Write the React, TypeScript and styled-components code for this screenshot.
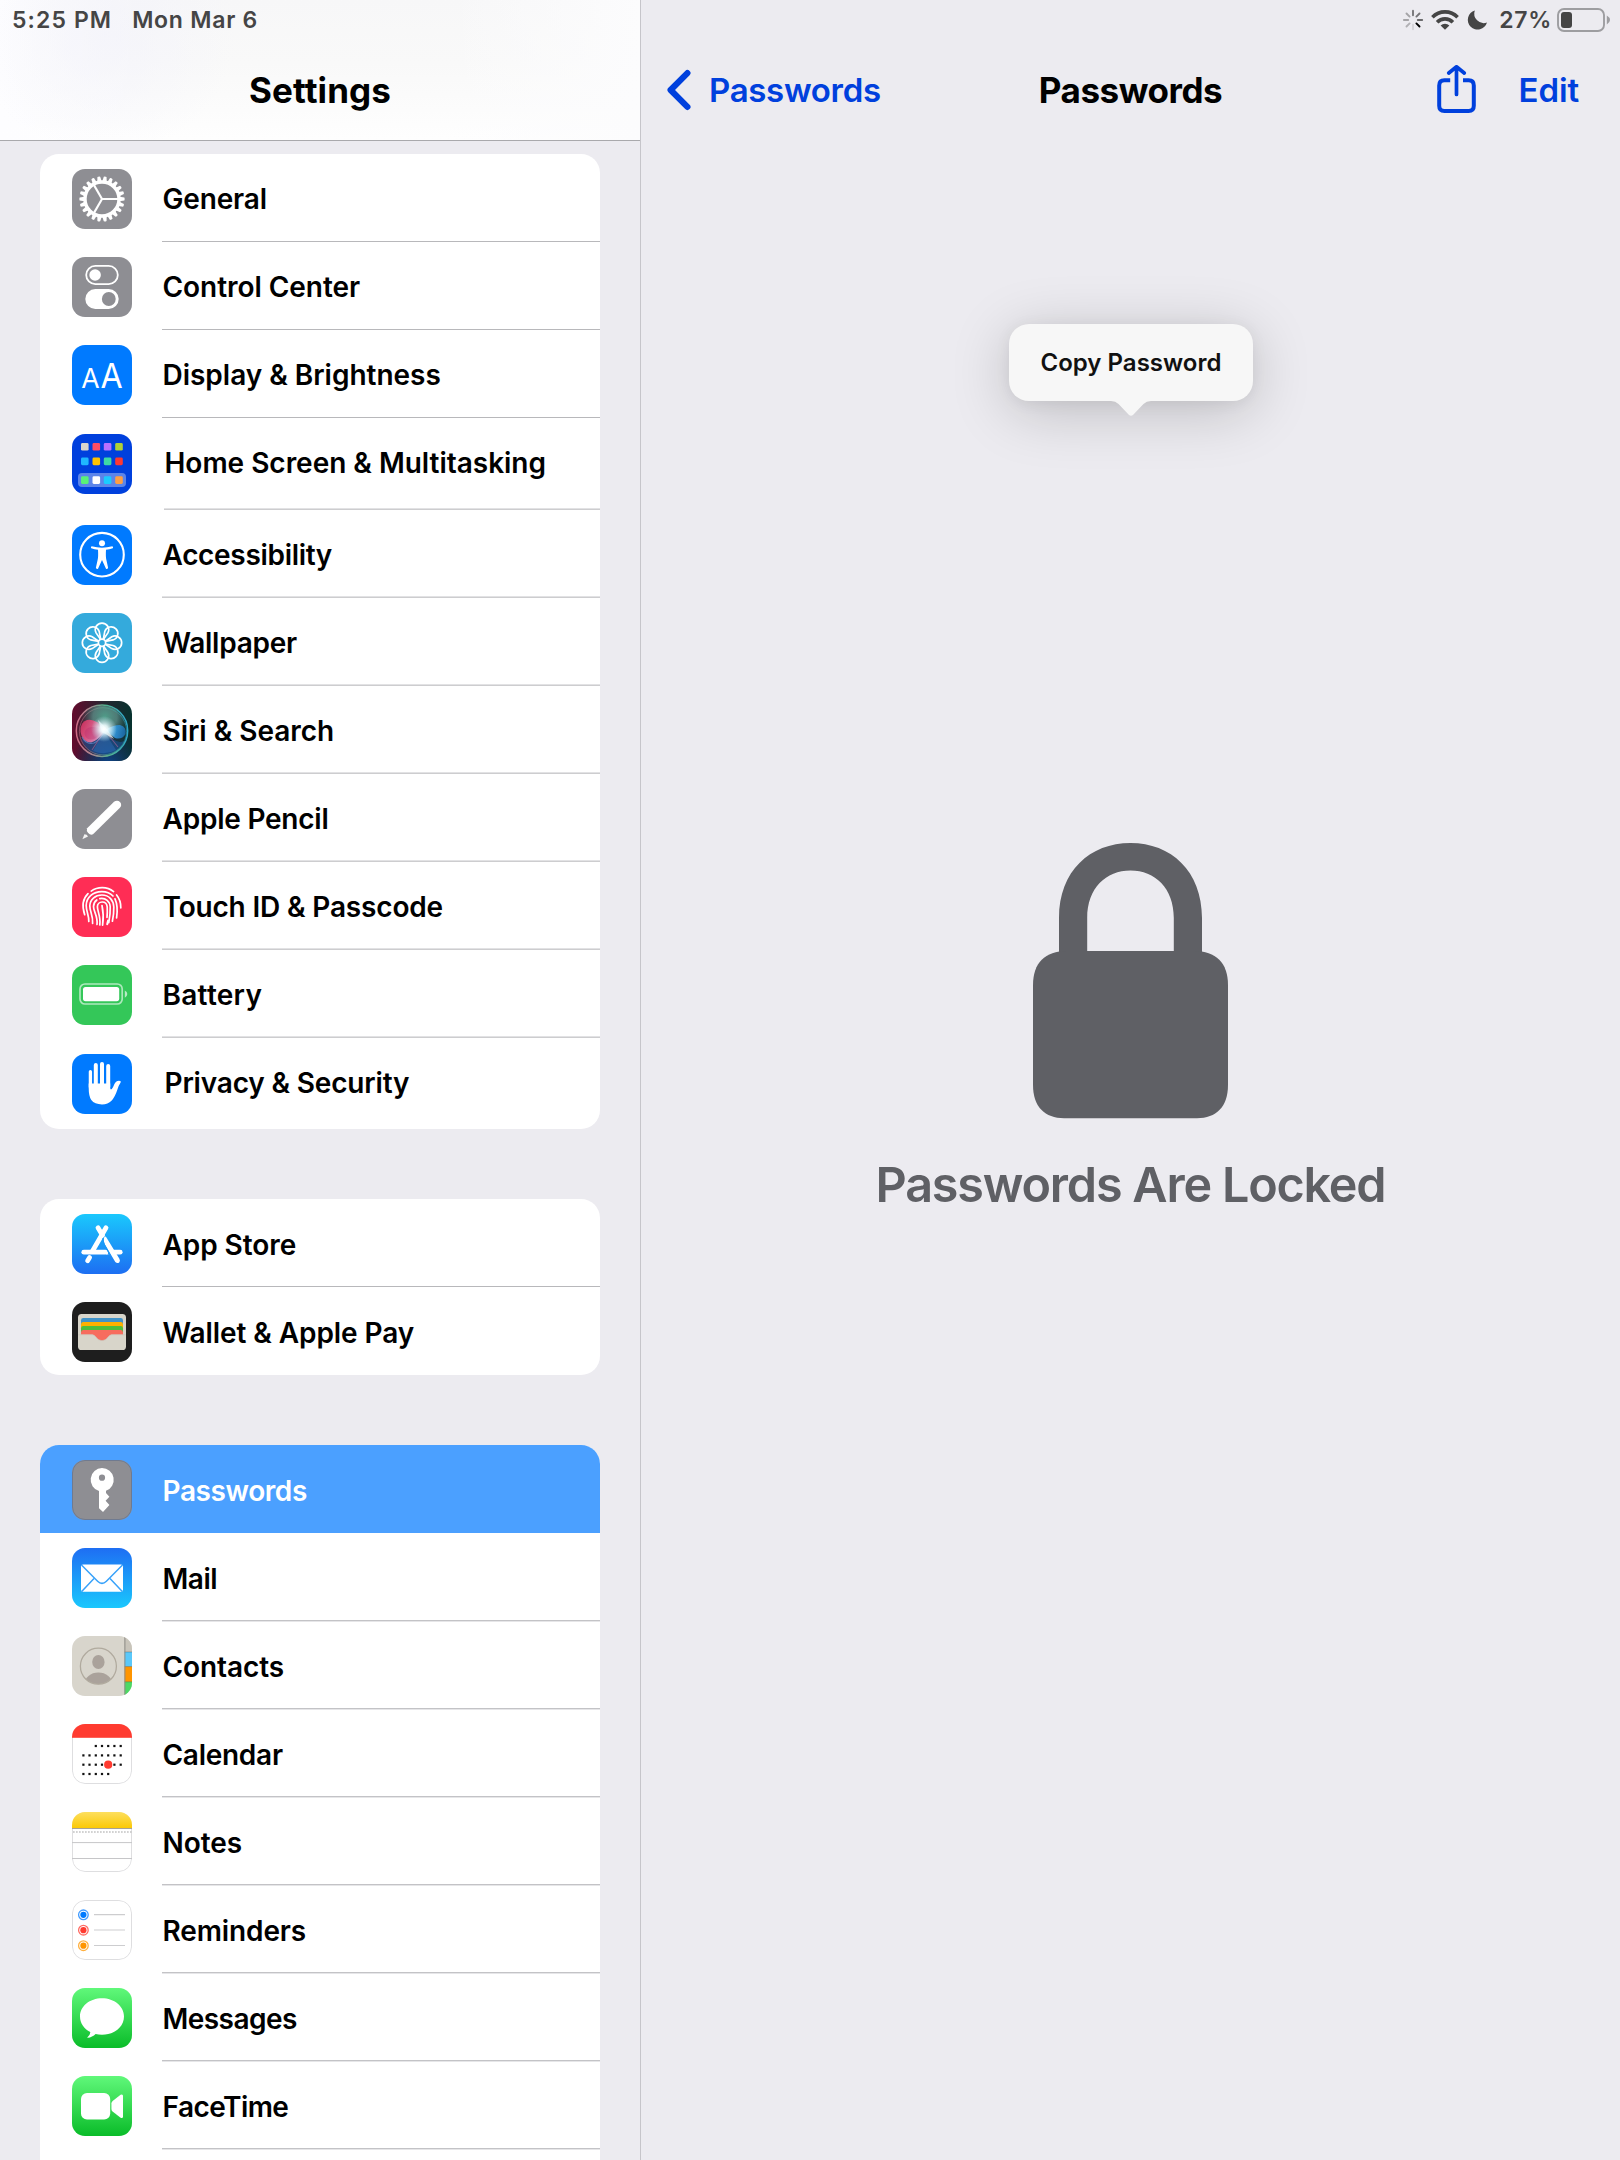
import React from "react";
import styled, { createGlobalStyle } from "styled-components";

const FONT = `Inter, "Liberation Sans", sans-serif`;
const BLUE = "#0040dd";

const GlobalStyle = createGlobalStyle`
  *, *::before, *::after { box-sizing: border-box; }
  html, body { margin: 0; padding: 0; background: #ecebf0; }
  body { font-family: ${FONT}; overflow: hidden; }
`;

const Screen = styled.div`
  display: grid;
  grid-template-columns: 641px 1fr;
  width: 1620px;
  height: 2160px;
  overflow: hidden;
  background: #ecebf0;
  color: #000;
`;

/* ---------- sidebar ---------- */

const Sidebar = styled.aside`
  display: flex;
  flex-direction: column;
  min-width: 0;
  height: 2160px;
  overflow: hidden;
  border-right: 1px solid #c6c5ca;
`;

const SidebarHeader = styled.header`
  flex: none;
  height: 141px;
  border-bottom: 1px solid #a9a9ac;
  background: radial-gradient(ellipse 130px 120px at 105px 35px, rgba(243, 243, 251, 0.7) 0%, rgba(246, 246, 252, 0) 100%),
    linear-gradient(90deg, #fdfdff 0%, rgba(253, 253, 255, 0) 22%, rgba(253, 253, 253, 0) 70%, #fcfcfd 100%),
    linear-gradient(180deg, #f7f7f8 0%, #f9f9f9 45%, #fefefe 100%);
`;

const StatusBar = styled.div<{ $right?: boolean }>`
  display: flex;
  align-items: center;
  height: 40px;
  justify-content: ${(p) => (p.$right ? "flex-end" : "flex-start")};
  padding: ${(p) => (p.$right ? "0 10px 0 0" : "0 0 0 12px")};
  gap: ${(p) => (p.$right ? "0" : "20px")};
`;

const StatusText = styled.span<{ $track: number }>`
  font-size: 23px;
  line-height: 40px;
  font-weight: 600;
  letter-spacing: ${(p) => p.$track}px;
  color: #454545;
  white-space: nowrap;
`;

const NavTitle = styled.h1<{ $track: number }>`
  margin: 0;
  font-size: 35px;
  line-height: 100px;
  height: 100px;
  font-weight: 700;
  letter-spacing: ${(p) => p.$track}px;
  text-align: center;
  white-space: nowrap;
`;

const GroupList = styled.div`
  display: flex;
  flex-direction: column;
  gap: 70px;
  padding: 13px 40px 0;
`;

const Group = styled.section`
  flex: none;
  border-radius: 19px;
  background: #fff;
  overflow: hidden;
`;

type LineKind = "crisp" | "above" | "below" | "none";

const Row = styled.div<{ $height: number; $selected?: boolean }>`
  display: flex;
  height: ${(p) => p.$height}px;
  padding-left: 32px;
  background: ${(p) => (p.$selected ? "#4ba0ff" : "transparent")};
  color: ${(p) => (p.$selected ? "#fff" : "#000")};
`;

const IconSlot = styled.div<{ $top: number }>`
  flex: none;
  width: 60px;
  height: 60px;
  margin-top: ${(p) => p.$top}px;
  border-radius: 13px;
  overflow: hidden;
  svg { display: block; }
`;

const LINES: Record<LineKind, string> = {
  crisp: "border-bottom: 1px solid #b8b8bb;",
  above: "border-bottom: 1px solid #cdcdcf; box-shadow: inset 0 -1px 0 #e2e2e4;",
  below: "border-bottom: 1px solid #c3c3c6; box-shadow: 0 1px 0 #e6e6e8;",
  none: "",
};

const LabelCell = styled.div<{ $line: LineKind; $wide?: boolean; $top: number }>`
  flex: 1;
  margin-left: ${(p) => (p.$wide ? 32 : 30)}px;
  padding-top: ${(p) => p.$top}px;
  padding-left: 0.5px;
  ${(p) => LINES[p.$line]}
`;

const Label = styled.span<{ $track: number }>`
  display: block;
  font-size: 28px;
  line-height: 60px;
  font-weight: 600;
  letter-spacing: ${(p) => p.$track}px;
  white-space: nowrap;
`;

/* ---------- detail pane ---------- */

const Detail = styled.main`
  position: relative;
  display: flex;
  flex-direction: column;
  min-width: 0;
`;

const NavBar = styled.nav`
  display: grid;
  grid-template-columns: 1fr auto 1fr;
  align-items: center;
  height: 100px;
  padding: 0 25px;
`;

const BackButton = styled.div`
  display: flex;
  align-items: center;
  gap: 17px;
`;

const NavActions = styled.div`
  display: flex;
  align-items: center;
  justify-content: flex-end;
  gap: 42px;
  padding-right: 16px;
`;

const NavText = styled.span<{ $track: number }>`
  font-size: 33px;
  line-height: 100px;
  font-weight: 560;
  letter-spacing: ${(p) => p.$track}px;
  color: ${BLUE};
  white-space: nowrap;
`;

const LockedState = styled.div`
  display: flex;
  flex-direction: column;
  align-items: center;
  padding-top: 703px;
`;

const LockedText = styled.p`
  margin: 34px 0 0;
  font-size: 48.5px;
  line-height: 64px;
  font-weight: 600;
  letter-spacing: -1.2px;
  color: #5f6065;
  white-space: nowrap;
`;

const Callout = styled.div`
  position: absolute;
  left: 368px;
  top: 324px;
  width: 244px;
  height: 77px;
  border-radius: 20px;
  background: #f7f7f7;
  box-shadow: 0 10px 60px rgba(0, 0, 0, 0.2), 0 2px 16px rgba(0, 0, 0, 0.06);
  font-size: 24px;
  line-height: 77px;
  font-weight: 600;
  letter-spacing: 0.02px;
  text-align: center;
  color: #111;
  white-space: nowrap;
`;

const CalloutArrow = styled.svg`
  position: absolute;
  left: 98px;
  top: 76px;
  width: 48px;
  height: 17px;
`;

/* ---------- row icons, all on a 60 x 60 tile ---------- */

function Tile({ fill, children }: { fill: string; children?: React.ReactNode }) {
  return (
    <svg width="60" height="60" viewBox="0 0 60 60" fill="none">
      <rect width="60" height="60" fill={fill} />
      {children}
    </svg>
  );
}

function GearIcon() {
  return (
    <Tile fill="#8e8e93">
      <g transform="translate(30 30)">
        {Array.from({ length: 22 }, (_, i) => (
          <path key={i} d="M17.5 -2.2 L22.4 -1.4 Q23 0 22.4 1.4 L17.5 2.2Z" fill="#fff" transform={`rotate(${(i * 360) / 22})`} />
        ))}
        <circle r="17" stroke="#fff" strokeWidth="3.4" />
        {[0, 120, 240].map((a) => (
          <path key={a} d="M0 0H16" stroke="#fff" strokeWidth="2.1" transform={`rotate(${a})`} />
        ))}
      </g>
    </Tile>
  );
}

function TogglesIcon() {
  return (
    <Tile fill="#8e8e93">
      <rect x="14.2" y="8.9" width="31.6" height="18.2" rx="9.1" stroke="#fff" strokeWidth="1.8" />
      <circle cx="23.1" cy="18" r="5.8" fill="#fff" />
      <rect x="13.3" y="32" width="33.4" height="20" rx="10" fill="#fff" />
      <circle cx="36.8" cy="42" r="6.9" fill="#8e8e93" />
    </Tile>
  );
}

function DisplayIcon() {
  return (
    <Tile fill="#007aff">
      <g fill="#fff" fontFamily="Inter, sans-serif" fontWeight="400">
        <text x="9.3" y="42.6" fontSize="27" textLength="18.4" lengthAdjust="spacingAndGlyphs">A</text>
        <text x="28.6" y="42.6" fontSize="34.5" textLength="22.2" lengthAdjust="spacingAndGlyphs">A</text>
      </g>
    </Tile>
  );
}

function HomeScreenIcon() {
  const colors = [
    ["#d9d5cc", "#ff4d64", "#b970ff", "#b0d136"],
    ["#1fb6ff", "#ffc300", "#3edaa5", "#ff3830"],
    ["#5af277", "#ffffff", "#1bcbff", "#ff9f43"],
  ];
  const ys = [9, 23.6, 42.3];
  const xs = [9, 20.5, 31.8, 43.2];
  return (
    <Tile fill="#0040dd">
      <rect x="6" y="39" width="48" height="14" rx="4" fill="#fff" fillOpacity=".36" />
      {colors.map((line, r) => line.map((c, i) => <rect key={c} x={xs[i]} y={ys[r]} width="7.6" height="7.6" rx="1.4" fill={c} />))}
    </Tile>
  );
}

function AccessibilityIcon() {
  return (
    <Tile fill="#007aff">
      <circle cx="30" cy="29.7" r="21.8" stroke="#fff" strokeWidth="2.1" />
      <circle cx="30" cy="18.2" r="3" fill="#fff" />
      <path
        d="M19.6 21.3 Q25 22.7 30 22.7 Q35 22.7 40.4 21.3 Q41.6 22.2 40.8 23.2 Q37.5 24.3 34 24.8 Q33.6 31.5 34.3 34.6 L36.1 42.8 Q35.4 44.6 34 43.8 L30 35 L26 43.8 Q24.6 44.6 23.9 42.8 L25.7 34.6 Q26.4 31.5 26 24.8 Q22.5 24.3 19.2 23.2 Q18.4 22.2 19.6 21.3Z"
        fill="#fff"
      />
    </Tile>
  );
}

function WallpaperIcon() {
  return (
    <Tile fill="#34aadc">
      <g transform="translate(30 29.7)" stroke="#fff" strokeWidth="1.7">
        {Array.from({ length: 8 }, (_, i) => (
          <path key={i} d="M-1.5 -3.4 L-5.9 -9.8 A6.7 6.7 0 1 1 5.9 -9.8 L1.5 -3.4" transform={`rotate(${i * 45})`} />
        ))}
        <circle r="3.6" />
      </g>
    </Tile>
  );
}

function SiriIcon() {
  return (
    <svg width="60" height="60" viewBox="0 0 60 60" fill="none">
      <defs>
        <linearGradient id="siriBase" x1="0" y1="0" x2="60" y2="0" gradientUnits="userSpaceOnUse">
          <stop offset="0" stopColor="#640a2d" />
          <stop offset=".5" stopColor="#2a2430" />
          <stop offset="1" stopColor="#07322f" />
        </linearGradient>
        <radialGradient id="siriFloor" cx="36" cy="64" r="36" gradientUnits="userSpaceOnUse">
          <stop offset="0" stopColor="#0c4790" />
          <stop offset="1" stopColor="#0c2f5c" stopOpacity="0" />
        </radialGradient>
        <linearGradient id="siriPink" x1="8" y1="20" x2="32" y2="36" gradientUnits="userSpaceOnUse">
          <stop offset="0" stopColor="#d62f5e" />
          <stop offset=".5" stopColor="#ec5b8c" />
          <stop offset="1" stopColor="#e9a5d0" />
        </linearGradient>
        <linearGradient id="siriBlue" x1="33" y1="30" x2="55" y2="32" gradientUnits="userSpaceOnUse">
          <stop offset="0" stopColor="#b9ecff" />
          <stop offset=".5" stopColor="#2f97e0" />
          <stop offset="1" stopColor="#1d76c8" stopOpacity=".8" />
        </linearGradient>
        <radialGradient id="siriGreen" cx="33" cy="16" r="24" gradientUnits="userSpaceOnUse">
          <stop offset="0" stopColor="#4f9c88" />
          <stop offset=".5" stopColor="#5b8f88" stopOpacity=".8" />
          <stop offset="1" stopColor="#2a6160" stopOpacity=".1" />
        </radialGradient>
        <radialGradient id="siriGlow" cx="32" cy="28" r="13" gradientUnits="userSpaceOnUse">
          <stop offset="0" stopColor="#fff" />
          <stop offset=".3" stopColor="#effdff" stopOpacity=".9" />
          <stop offset="1" stopColor="#b9e4f0" stopOpacity="0" />
        </radialGradient>
        <linearGradient id="siriRing" x1="5" y1="34" x2="55" y2="30" gradientUnits="userSpaceOnUse">
          <stop offset="0" stopColor="#cf6c86" />
          <stop offset=".3" stopColor="#a58a90" />
          <stop offset=".6" stopColor="#54b08c" />
          <stop offset="1" stopColor="#2fa6c8" />
        </linearGradient>
      </defs>
      <rect width="60" height="60" fill="url(#siriBase)" />
      <rect width="60" height="60" fill="url(#siriFloor)" />
      <circle cx="30" cy="29.7" r="25" fill="url(#siriGreen)" />
      <path d="M9 38 Q20 44 32 30 Q44 44 52 40 Q46 54 31 54 Q15 53 9 38Z" fill="#1c62b8" fillOpacity=".4" />
      <path d="M32 30 L21 50 Q33 55 44 49Z" fill="#3a7fd0" fillOpacity=".35" />
      <path d="M33 29 Q24 17 15 19 Q8 21 8.5 31 Q10 41 19 41.5 Q26 40 33 29Z" fill="url(#siriPink)" fillOpacity=".88" />
      <path d="M10 36 Q14 44 22 42 Q28 39 33 30" stroke="#5f86c8" strokeOpacity=".8" strokeWidth="1.2" />
      <path d="M33 29 Q24 25 17 26.5 Q11 29 13 35 Q17 41 24 37Z" fill="#b3266a" fillOpacity=".3" />
      <path d="M33 29 Q41 24 48 24 Q55 26 53.5 33 Q50 39 43 37Z" fill="url(#siriBlue)" fillOpacity=".85" />
      <path d="M34 31 L46 46 M31 32 L20 49" stroke="#c0689c" strokeOpacity=".55" strokeWidth="1.1" />
      <path d="M26 19 L34 27 L42 38 L30 31Z" fill="#fff" fillOpacity=".7" />
      <circle cx="32" cy="28" r="13" fill="url(#siriGlow)" />
      <circle cx="30" cy="29.7" r="25.7" stroke="url(#siriRing)" strokeWidth="1.5" />
      <circle cx="31" cy="30.3" r="23.6" stroke="url(#siriRing)" strokeWidth=".9" strokeOpacity=".6" />
    </svg>
  );
}

function PencilIcon() {
  return (
    <Tile fill="#8e8e93">
      <path
        d="M-19.8 -4.2 H17.9 A4.2 4.2 0 0 1 17.9 4.2 H-19.8 Q-22.4 3.2 -22.4 0 Q-22.4 -3.2 -19.8 -4.2Z"
        fill="#fff"
        transform="translate(32.2 28.4) rotate(-44.5)"
      />
      <path d="M12.4 45.2 Q15.2 45.2 16 47.4 L10.4 50.2 Z" fill="#fff" fillOpacity=".9" />
    </Tile>
  );
}

function TouchIdIcon() {
  return (
    <Tile fill="#ff2d55">
      <g stroke="#fff" strokeWidth="1.7" strokeLinecap="round">
        <path d="M19.2 14.1 A19 19 0 0 1 41.6 14.6" />
        <path d="M16 16.7 C11 21.6 9.7 29 12.7 37.7" />
        <path d="M44.6 18 C47.4 21.4 48.9 25.6 48.8 30.8" />
        <path d="M16.8 44.5 C17 38 14.2 34.5 14.2 28.5 C14.4 20 21.2 14.6 29.8 14.6 C34.4 14.6 38.2 16 41 19" />
        <path d="M43 21.8 C45.6 27.5 45.6 34 44.6 40.8" />
        <path d="M20.6 46.3 C21.3 38.6 17.8 35 17.8 28.8 C18 22.5 23.2 18 29.8 18 C37.4 18 41.6 23.6 41.8 30 C41.9 35 41.3 40 40.4 44.2" />
        <path d="M25 47.5 C26 38.6 21.4 34.6 21.5 29.4 C21.6 26.6 22.8 24.4 24.8 23" />
        <path d="M27.8 21.6 C33.8 20.6 37.9 24.4 38.2 29.8 C38.4 35 37.8 40.5 36.8 45.6" />
        <path d="M27.8 48 C29 40 25.4 34.2 25.4 29.8 C25.4 23.6 34.6 23.2 35.2 29.8 C35.4 33.8 35.4 37 35 40.4" />
        <path d="M30 28.5 C31.4 35 31.6 41.5 30.6 48.2" />
        <path d="M36 43.6 L35.2 47.3" strokeWidth="2" />
      </g>
    </Tile>
  );
}

function BatteryIcon() {
  return (
    <Tile fill="#34c759">
      <rect x="8" y="19" width="42.2" height="20" rx="5" stroke="#fff" strokeOpacity=".6" strokeWidth="1.7" />
      <rect x="11" y="22" width="36.2" height="14.2" rx="2.6" fill="#fff" />
      <path d="M52.8 25.4 Q55.3 26.8 55.3 29.1 Q55.3 31.4 52.8 32.8Z" fill="#fff" fillOpacity=".65" />
    </Tile>
  );
}

function HandIcon() {
  return (
    <Tile fill="#007aff">
      <g stroke="#fff" strokeLinecap="round">
        <path d="M18.4 17.7 V33" strokeWidth="3.3" />
        <path d="M23.8 11 V33" strokeWidth="4" />
        <path d="M30 10 V33" strokeWidth="4" />
        <path d="M36.2 12 V33" strokeWidth="4" />
      </g>
      <path
        d="M16.7 29.5 H38.2 V34 Q38.4 36.2 39.8 35 Q41.2 33.4 42.2 30.6 Q43.6 26.8 47 26.8 Q49.4 26.9 48.6 28.4 Q46.6 31.4 45.6 35 Q43 43 39.5 46.8 Q36 50.4 30 50.4 Q22.6 50.4 19.3 46 Q16.7 42.3 16.7 34Z"
        fill="#fff"
      />
    </Tile>
  );
}

function AppStoreIcon() {
  return (
    <Tile fill="url(#storeFill)">
      <defs>
        <linearGradient id="storeFill" x1="0" y1="0" x2="0" y2="1">
          <stop offset="0" stopColor="#1ac8fd" />
          <stop offset="1" stopColor="#1d6ef2" />
        </linearGradient>
      </defs>
      <g stroke="#fff" strokeWidth="4.8" strokeLinecap="round">
        <path d="M26 13.8 L30.5 21.3" />
        <path d="M34 13.8 L20.5 37" />
        <path d="M11.8 38.2 H33.5" />
        <path d="M42 38.2 H48.2" />
        <path d="M17.6 43.6 L15.6 46.8" />
      </g>
      <path d="M34.5 36.5 L36.5 40.6 H34 Z" fill="#fff" />
      <path d="M32.6 22.6 Q30.8 26 32.8 30.2 L43.3 48 Q45.2 49.8 47.2 48.4 Q48.6 46.8 47.4 44.8 L34.6 23.8 Q33.6 22 32.6 22.6Z" fill="#fff" />
      <path d="M31 24 Q30.6 27.6 32.4 30.8 L38.4 41.5" stroke="#1c98f7" strokeWidth="1.1" />
    </Tile>
  );
}

function WalletIcon() {
  return (
    <Tile fill="#1e1e1e">
      <rect x="6" y="12" width="48" height="36" rx="3.6" fill="#d8d5ca" />
      <rect x="9" y="16" width="42" height="14" rx="2.4" fill="#4193c8" />
      <rect x="9" y="20" width="42" height="12" rx="2.4" fill="#ffb000" />
      <rect x="9" y="24" width="42" height="8" rx="2.4" fill="#50bd3c" />
      <path d="M9 30.4 Q9 28 11.4 28 H48.6 Q51 28 51 30.4 V32.4 H39.5 Q37.6 32.6 36 35 Q33.6 38.4 30 38.4 Q26.4 38.4 24 35 Q22.4 32.6 20.5 32.4 H9Z" fill="#f76c5e" />
      <path d="M6 32.8 H20.5 Q22.4 33 24 35.4 Q26.4 38.6 30 38.6 Q33.6 38.6 36 35.4 Q37.6 33 39.5 32.8 H54" stroke="#c9c5ba" strokeWidth=".6" />
    </Tile>
  );
}

function KeyIcon() {
  return (
    <svg width="60" height="60" viewBox="0 0 60 60" fill="none">
      <rect width="60" height="60" fill="#8e8e93" />
      <rect x=".5" y=".5" width="59" height="59" rx="12.5" stroke="#6f7a90" strokeWidth="1" />
      <path
        fillRule="evenodd"
        d="M30 8.1 A11.7 11.7 0 0 1 34 30.8 V33 L37.4 36.7 L33.6 40.8 L37.4 45 L31 52 L27 48.2 V31 A11.7 11.7 0 0 1 30 8.1Z M30 14.6 A3.1 3.1 0 1 0 30 20.8 A3.1 3.1 0 1 0 30 14.6Z"
        fill="#fff"
      />
    </svg>
  );
}

function MailIcon() {
  return (
    <Tile fill="url(#mailFill)">
      <defs>
        <linearGradient id="mailFill" x1="0" y1="0" x2="0" y2="1">
          <stop offset="0" stopColor="#1e6ef3" />
          <stop offset="1" stopColor="#1ac8fd" />
        </linearGradient>
      </defs>
      <rect x="9" y="16.4" width="42" height="27.4" rx="2" fill="#fff" />
      <g stroke="#38a2fa" strokeWidth="1.5">
        <path d="M9.5 17 L25.6 33.2 Q30 37.6 34.4 33.2 L50.5 17" />
        <path d="M9.7 43.4 L22 30.6 M50.3 43.4 L38 30.6" />
      </g>
    </Tile>
  );
}

function ContactsIcon() {
  return (
    <Tile fill="#d8d5cc">
      <rect x="52.6" width="7.4" height="16" fill="#c8c4ba" />
      <rect x="52.6" y="16" width="7.4" height="14.6" fill="#5ac8fa" />
      <rect x="52.6" y="30.6" width="7.4" height="15.2" fill="#ff9500" />
      <rect x="52.6" y="45.8" width="7.4" height="14.2" fill="#4cd964" />
      <path d="M52.6 16H60M52.6 30.6H60M52.6 45.8H60" stroke="#000" strokeOpacity=".22" />
      <path d="M52.9 0V60" stroke="#8d8a84" strokeWidth="1" />
      <clipPath id="avatarClip">
        <circle cx="26.4" cy="30.2" r="18" />
      </clipPath>
      <ellipse cx="26.4" cy="26" rx="6.2" ry="7" fill="#aaa29b" />
      <ellipse cx="26.4" cy="48" rx="14" ry="11.4" fill="#aaa29b" clipPath="url(#avatarClip)" />
      <circle cx="26.4" cy="30.2" r="18" stroke="#b0aa9e" strokeWidth="1.3" />
    </Tile>
  );
}

function TileBorder() {
  return <rect x=".5" y=".5" width="59" height="59" rx="12.6" stroke="#dedee0" strokeWidth="1" />;
}

function CalendarIcon() {
  const xs = [11.4, 17.5, 23.8, 30, 36.2, 42.4, 48.7];
  const rows: [number, number, number][] = [
    [22, 2, 6],
    [31.4, 0, 6],
    [40.7, 0, 6],
    [50, 0, 4],
  ];
  return (
    <Tile fill="#fff">
      <TileBorder />
      <rect width="60" height="13.8" fill="#ff3b30" />
      {rows.map(([y, from, to]) =>
        xs.slice(from, to + 1).map((x) => <rect key={`${x}-${y}`} x={x - 1.1} y={y - 1.1} width="2.2" height="2.2" fill="#111" />)
      )}
      <circle cx="36.2" cy="40.7" r="4.1" fill="#ff3b30" />
    </Tile>
  );
}

function NotesIcon() {
  return (
    <Tile fill="#fff">
      <defs>
        <linearGradient id="notesFill" x1="0" y1="0" x2="0" y2="1">
          <stop offset="0" stopColor="#fddf5e" />
          <stop offset="1" stopColor="#fbc906" />
        </linearGradient>
      </defs>
      <TileBorder />
      <rect width="60" height="16" fill="url(#notesFill)" />
      <path d="M0 16.5H60" stroke="#a7a294" strokeWidth="1" />
      <path d="M1 20H60" stroke="#c4c4c4" strokeWidth="1.6" strokeDasharray="1.7 1.3" />
      <path d="M0 30.6H60M0 46.5H60" stroke="#c6c6c8" strokeWidth="1" />
    </Tile>
  );
}

function RemindersIcon() {
  const items: [string, number][] = [
    ["#007aff", 14.8],
    ["#ff3b30", 30.2],
    ["#ff9500", 45.7],
  ];
  return (
    <Tile fill="#fff">
      <TileBorder />
      {items.map(([c, y]) => (
        <g key={c}>
          <circle cx="11.4" cy={y} r="4.8" stroke={c} strokeOpacity=".75" strokeWidth="1.3" />
          <circle cx="11.4" cy={y} r="3.1" fill={c} />
          <path d={`M22 ${y - 0.2}H53`} stroke="#cdcdcf" strokeWidth="1.2" />
        </g>
      ))}
    </Tile>
  );
}

function GreenDefs({ id }: { id: string }) {
  return (
    <defs>
      <linearGradient id={id} x1="0" y1="0" x2="0" y2="1">
        <stop offset="0" stopColor="#60f87a" />
        <stop offset="1" stopColor="#0abc29" />
      </linearGradient>
    </defs>
  );
}

function MessagesIcon() {
  return (
    <Tile fill="url(#messagesFill)">
      <GreenDefs id="messagesFill" />
      <path
        d="M30 10.2 C42.2 10.2 52 18.2 52 28.4 C52 38.7 42.2 46.8 30 46.8 C27.6 46.8 25.6 46.5 23.6 46 C21.6 48 18.6 49.6 15.8 49.8 C15.2 49.8 15.2 49.3 15.7 48.9 C17.4 47.6 18.2 45.8 18.3 44 C12 40.8 8 35 8 28.4 C8 18.2 17.8 10.2 30 10.2Z"
        fill="#fff"
      />
    </Tile>
  );
}

function FaceTimeIcon() {
  return (
    <Tile fill="url(#facetimeFill)">
      <GreenDefs id="facetimeFill" />
      <rect x="9" y="17" width="29.2" height="26.6" rx="6" fill="#fff" />
      <path d="M39.4 27.6 Q39.4 26 40.6 25 L48.6 18.8 Q51 17.6 51 20 V40.4 Q51 42.8 48.6 41.7 L40.6 35.6 Q39.4 34.6 39.4 33Z" fill="#fff" />
    </Tile>
  );
}

/* ---------- status bar and nav drawings ---------- */

const StatusGlyphs = styled.svg`
  display: block;
  flex: none;
  margin-right: 12px;
`;

const BatteryGlyph = styled.svg`
  display: block;
  flex: none;
  margin-left: 5px;
`;

function StatusSymbols() {
  const shades = [0.5, 0.5, 0.55, 1, 0.1, 0.25, 0.3, 0.3];
  return (
    <StatusGlyphs width="84" height="40" viewBox="0 0 84 40" fill="none">
      <g transform="translate(10 20)">
        {shades.map((shade, i) => (
          <path key={i} d="M0 -4.8V-9.2" stroke="#000" strokeOpacity={shade} strokeWidth="1.9" strokeLinecap="round" transform={`rotate(${i * 45})`} />
        ))}
      </g>
      <g transform="translate(42 0)" stroke="#454545" strokeWidth="3.6">
        <path d="M-12.6 17.2 A17.6 17.6 0 0 1 12.6 17.2" />
        <path d="M-7.9 22.2 A11 11 0 0 1 7.9 22.2" />
        <path d="M0 29.8 L-4.4 25.6 A6.4 6.4 0 0 1 4.4 25.6Z" fill="#454545" stroke="none" />
      </g>
      <path d="M71.8 10.2 A9.8 9.8 0 1 0 84 22.4 A9.6 9.6 0 0 1 71.8 10.2Z" fill="#454545" transform="translate(0 .2)" />
    </StatusGlyphs>
  );
}

function ShareGlyph() {
  return (
    <svg width="40" height="50" viewBox="0 0 40 50" fill="none" stroke={BLUE} strokeWidth="4" strokeLinecap="round" strokeLinejoin="round">
      <path d="M13.2 15.2 H7.4 Q2.2 15.2 2.2 20.4 V40.8 Q2.2 46 7.4 46 H31.6 Q36.8 46 36.8 40.8 V20.4 Q36.8 15.2 31.6 15.2 H26" strokeLinecap="butt" />
      <path d="M19.5 29.5 V2 M11.8 8 L19.5 1.8 L27.2 8" strokeWidth="3.7" />
    </svg>
  );
}

function LockGlyph() {
  return (
    <svg width="195" height="276" viewBox="0 0 195 276" fill="#5f6065">
      <path
        fillRule="evenodd"
        d="M26 114 V75 C26 28 57 0 97.5 0 C138 0 169 28 169 75 V114 H140.8 V75 C140.8 45 122 27.4 97.5 27.4 C73 27.4 54.2 45 54.2 75 V114Z"
      />
      <path d="M34 108 H161 C183 108 195 120 195 142 V242 C195 264 183 275.2 164 275.2 H31 C12 275.2 0 264 0 242 V142 C0 120 12 108 34 108Z" />
    </svg>
  );
}

/* ---------- data ---------- */

type Item = {
  label: string;
  icon: () => React.ReactElement;
  track: number;
  line: LineKind;
  height?: number;
  tall?: boolean;
  selected?: boolean;
};

const GROUPS: Item[][] = [
  [
    { label: "General", icon: GearIcon, track: -0.15, line: "crisp" },
    { label: "Control Center", icon: TogglesIcon, track: -0.05, line: "crisp" },
    { label: "Display & Brightness", icon: DisplayIcon, track: -0.02, line: "crisp" },
    { label: "Home Screen & Multitasking", icon: HomeScreenIcon, track: -0.02, line: "above", height: 92, tall: true },
    { label: "Accessibility", icon: AccessibilityIcon, track: -0.32, line: "above" },
    { label: "Wallpaper", icon: WallpaperIcon, track: -0.27, line: "above" },
    { label: "Siri & Search", icon: SiriIcon, track: -0.02, line: "above" },
    { label: "Apple Pencil", icon: PencilIcon, track: -0.23, line: "above" },
    { label: "Touch ID & Passcode", icon: TouchIdIcon, track: -0.17, line: "above" },
    { label: "Battery", icon: BatteryIcon, track: 0.28, line: "above" },
    { label: "Privacy & Security", icon: HandIcon, track: -0.17, line: "none", height: 91, tall: true },
  ],
  [
    { label: "App Store", icon: AppStoreIcon, track: -0.07, line: "crisp" },
    { label: "Wallet & Apple Pay", icon: WalletIcon, track: -0.07, line: "none" },
  ],
  [
    { label: "Passwords", icon: KeyIcon, track: -0.42, line: "none", selected: true },
    { label: "Mail", icon: MailIcon, track: -0.5, line: "below" },
    { label: "Contacts", icon: ContactsIcon, track: -0.09, line: "below" },
    { label: "Calendar", icon: CalendarIcon, track: -0.27, line: "below" },
    { label: "Notes", icon: NotesIcon, track: -0.05, line: "below" },
    { label: "Reminders", icon: RemindersIcon, track: -0.12, line: "below" },
    { label: "Messages", icon: MessagesIcon, track: -0.55, line: "below" },
    { label: "FaceTime", icon: FaceTimeIcon, track: -0.55, line: "below" },
  ],
];

function SettingsRow({ item, labelTop }: { item: Item; labelTop: number }) {
  const Icon = item.icon;
  return (
    <Row $height={item.height ?? 88} $selected={item.selected}>
      <IconSlot $top={item.tall ? 16 : 15}>
        <Icon />
      </IconSlot>
      <LabelCell $line={item.line} $wide={item.tall} $top={labelTop}>
        <Label $track={item.track}>{item.label}</Label>
      </LabelCell>
    </Row>
  );
}

const LastGroup = styled(Group)`
  height: 760px;
`;

export default function App() {
  return (
    <>
      <GlobalStyle />
      <Screen>
        <Sidebar>
          <SidebarHeader>
            <StatusBar>
              <StatusText $track={1.1}>5:25 PM</StatusText>
              <StatusText $track={0.75}>Mon Mar 6</StatusText>
            </StatusBar>
            <NavTitle $track={0.1}>Settings</NavTitle>
          </SidebarHeader>
          <GroupList>
            {GROUPS.map((items, i) => {
              const Box = i === GROUPS.length - 1 ? LastGroup : Group;
              return (
                <Box key={i}>
                  {items.map((item) => (
                    <SettingsRow key={item.label} item={item} labelTop={i === 0 ? 15 : 16} />
                  ))}
                </Box>
              );
            })}
          </GroupList>
        </Sidebar>
        <Detail>
          <StatusBar $right>
            <StatusSymbols />
            <StatusText $track={0.7}>27%</StatusText>
            <BatteryGlyph width="53" height="40" viewBox="0 0 53 40" fill="none">
              <rect x="1" y="9" width="46" height="22" rx="6" stroke="#9d9da0" strokeWidth="1.9" />
              <rect x="4" y="12" width="11" height="16" rx="3" fill="#454545" />
              <path d="M49.8 15.5 Q53 17.4 53 20 Q53 22.6 49.8 24.5Z" fill="#9d9da0" />
            </BatteryGlyph>
          </StatusBar>
          <NavBar>
            <BackButton>
              <svg width="26" height="42" viewBox="0 0 26 42" fill="none" stroke={BLUE} strokeWidth="6.2" strokeLinecap="round" strokeLinejoin="round">
                <path d="M21.4 4.1 L4.6 21 L21.4 37.9" />
              </svg>
              <NavText $track={-0.32}>Passwords</NavText>
            </BackButton>
            <NavTitle as="h2" $track={-0.45}>Passwords</NavTitle>
            <NavActions>
              <ShareGlyph />
              <NavText $track={-0.1}>Edit</NavText>
            </NavActions>
          </NavBar>
          <LockedState>
            <LockGlyph />
            <LockedText>Passwords Are Locked</LockedText>
          </LockedState>
          <Callout>
            Copy Password
            <CalloutArrow viewBox="0 0 48 17">
              <path d="M0 0 H48 V1 H44 Q39.5 1.2 36.5 4 L26 15 Q24 16.6 22 15 L11.5 4 Q8.5 1.2 4 1 H0Z" fill="#f7f7f7" />
            </CalloutArrow>
          </Callout>
        </Detail>
      </Screen>
    </>
  );
}
